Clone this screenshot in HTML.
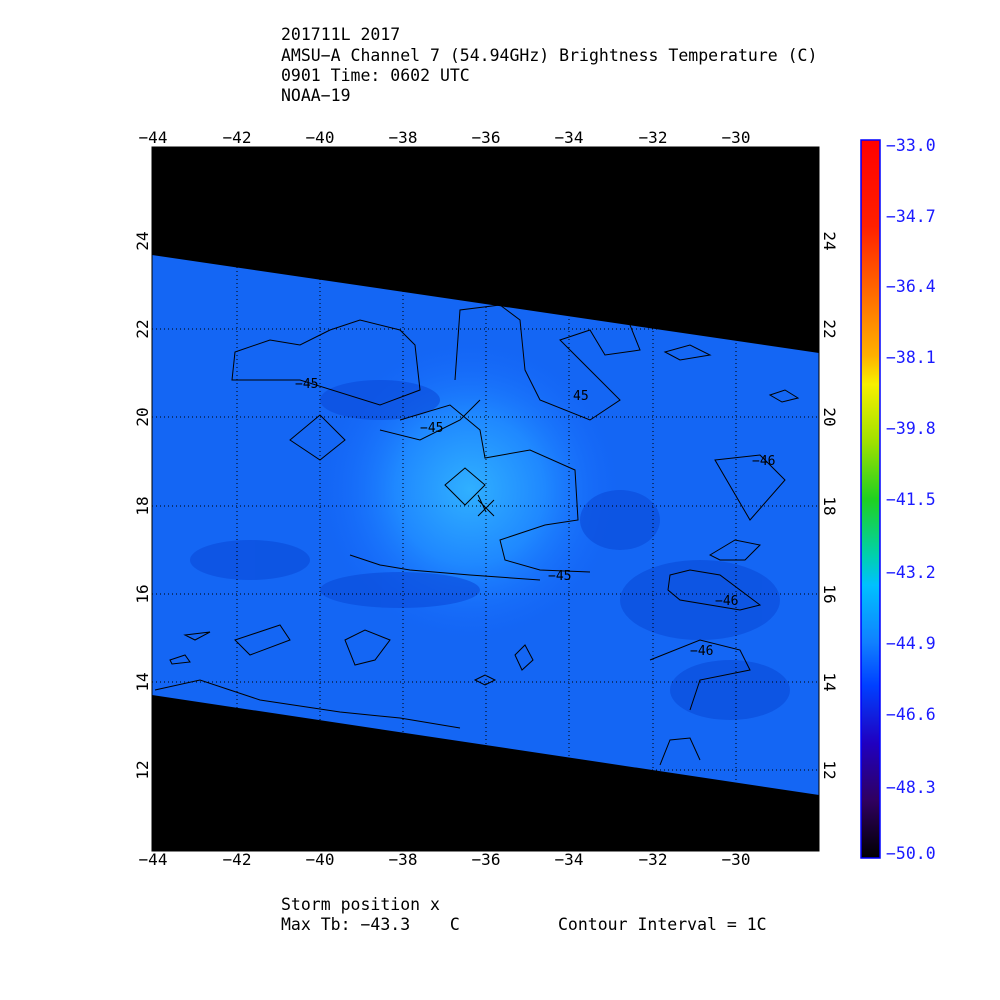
<!DOCTYPE html>
<html><head><style>
body{margin:0;background:#fff;width:1000px;height:1000px;overflow:hidden;font-family:"DejaVu Sans Mono","Liberation Mono",monospace;}
text{white-space:pre;}
</style></head><body>
<svg width="1000" height="1000" xmlns="http://www.w3.org/2000/svg" style="position:absolute;left:0;top:0">
<defs>
<radialGradient id="c1" cx="470" cy="490" r="150" gradientUnits="userSpaceOnUse">
<stop offset="0" stop-color="#30b0ff"/><stop offset="0.5" stop-color="#1f88ff"/><stop offset="1" stop-color="#1668ff" stop-opacity="0"/>
</radialGradient>
<linearGradient id="cb" x1="0" y1="0" x2="0" y2="1">
<stop offset="0" stop-color="#ff0000"/>
<stop offset="0.12" stop-color="#ff2000"/>
<stop offset="0.2" stop-color="#ff6000"/>
<stop offset="0.3" stop-color="#ffb000"/>
<stop offset="0.34" stop-color="#f8f000"/>
<stop offset="0.42" stop-color="#a0e000"/>
<stop offset="0.5" stop-color="#20d020"/>
<stop offset="0.58" stop-color="#00d0b0"/>
<stop offset="0.62" stop-color="#00c0ff"/>
<stop offset="0.7" stop-color="#1080ff"/>
<stop offset="0.76" stop-color="#0040ff"/>
<stop offset="0.84" stop-color="#2000c0"/>
<stop offset="0.92" stop-color="#300060"/>
<stop offset="1" stop-color="#000000"/>
</linearGradient>
</defs>
<g font-size="16.5" fill="#000">
<text x="281" y="40">201711L 2017</text>
<text x="281" y="61">AMSU−A Channel 7 (54.94GHz) Brightness Temperature (C)</text>
<text x="281" y="81">0901 Time: 0602 UTC</text>
<text x="281" y="101">NOAA−19</text>
<text x="281" y="910">Storm position x</text>
<text x="281" y="930">Max Tb: −43.3    C</text>
<text x="558" y="930">Contour Interval = 1C</text>
</g>
<rect x="152" y="147" width="667" height="704" fill="#000"/>
<polygon points="152,255 819,353 819,795 152,695" fill="#1466f4"/>
<polygon points="152,255 819,353 819,795 152,695" fill="url(#c1)"/>
<g fill="#0a4ad8" opacity="0.6">
<ellipse cx="700" cy="600" rx="80" ry="40"/><ellipse cx="620" cy="520" rx="40" ry="30"/>
<ellipse cx="250" cy="560" rx="60" ry="20"/><ellipse cx="400" cy="590" rx="80" ry="18"/>
<ellipse cx="730" cy="690" rx="60" ry="30"/><ellipse cx="380" cy="400" rx="60" ry="20"/>
</g>
<g stroke="#000" stroke-width="1" fill="none">
<path d="M232,380 L235,352 L270,340 L300,345 L330,330 L360,320 L400,330 L415,345 L420,390 L380,405 L300,380 L240,380Z"/>
<path d="M455,380 L460,310 L500,305 L520,320 L525,370 L540,400 L590,420 L620,400 L580,360 L560,340 L590,330 L605,355 L640,350 L630,325"/>
<path d="M400,420 L450,405 L480,430 L485,458 L530,450 L575,470 L578,520 L545,525 L500,540 L505,560 L540,570 L590,572"/>
<path d="M290,440 L320,415 L345,440 L320,460 Z"/>
<path d="M445,485 L465,468 L485,485 L465,505 Z"/>
<path d="M380,430 L420,440 L460,420 L480,400"/>
<path d="M350,555 L380,565 L410,570 L470,575 L540,580"/>
<path d="M665,352 L690,345 L710,355 L680,360 Z"/>
<path d="M710,555 L735,540 L760,545 L745,560 L720,560 Z"/>
<path d="M715,460 L760,455 L785,480 L750,520 Z"/>
<path d="M670,575 L690,570 L720,575 L760,605 L740,610 L680,600 L668,590Z"/>
<path d="M650,660 L700,640 L740,650 L750,670 L700,680 L690,710"/>
<path d="M770,395 L785,390 L798,398 L782,402 Z"/>
<path d="M185,635 L210,632 L195,640 Z M170,660 L185,655 L190,662 L172,664 Z"/>
<path d="M235,640 L280,625 L290,640 L250,655 Z"/>
<path d="M345,640 L365,630 L390,640 L375,660 L355,665 Z"/>
<path d="M515,655 L525,645 L533,660 L522,670 Z"/>
<path d="M475,680 L485,675 L495,680 L485,685 Z"/>
<path d="M155,690 L200,680 L260,700 L340,712 L400,718 L460,728"/>
<path d="M660,765 L670,740 L690,738 L700,760"/>
<path d="M478,495 L486,512 M478,500 L494,516 M494,500 L478,516"/>
</g>
<g font-size="13" fill="#000">
<text x="295" y="388">−45</text><text x="420" y="432">−45</text><text x="573" y="400">45</text>
<text x="548" y="580">−45</text><text x="715" y="605">−46</text><text x="752" y="465">−46</text><text x="690" y="655">−46</text>
</g>
<g stroke="#000" stroke-width="1" stroke-dasharray="1,3">
<path d="M237,147V851 M320,147V851 M403,147V851 M486,147V851 M569,147V851 M653,147V851 M736,147V851"/>
<path d="M152,241H819 M152,329H819 M152,417H819 M152,506H819 M152,594H819 M152,682H819 M152,770H819"/>
</g>
<rect x="152" y="147" width="667" height="704" fill="none" stroke="#000"/>
<g font-size="16" fill="#000" text-anchor="middle">
<text x="153" y="143">−44</text><text x="237" y="143">−42</text><text x="320" y="143">−40</text><text x="403" y="143">−38</text><text x="486" y="143">−36</text><text x="569" y="143">−34</text><text x="653" y="143">−32</text><text x="736" y="143">−30</text>
<text x="153" y="865">−44</text><text x="237" y="865">−42</text><text x="320" y="865">−40</text><text x="403" y="865">−38</text><text x="486" y="865">−36</text><text x="569" y="865">−34</text><text x="653" y="865">−32</text><text x="736" y="865">−30</text>
</g>
<g font-size="16" fill="#000" text-anchor="middle">
<text transform="translate(148,241) rotate(-90)">24</text><text transform="translate(148,329) rotate(-90)">22</text><text transform="translate(148,417) rotate(-90)">20</text><text transform="translate(148,506) rotate(-90)">18</text><text transform="translate(148,594) rotate(-90)">16</text><text transform="translate(148,682) rotate(-90)">14</text><text transform="translate(148,770) rotate(-90)">12</text>
<text transform="translate(824,241) rotate(90)">24</text><text transform="translate(824,329) rotate(90)">22</text><text transform="translate(824,417) rotate(90)">20</text><text transform="translate(824,506) rotate(90)">18</text><text transform="translate(824,594) rotate(90)">16</text><text transform="translate(824,682) rotate(90)">14</text><text transform="translate(824,770) rotate(90)">12</text>
</g>
<rect x="861" y="140" width="19" height="718" fill="url(#cb)" stroke="#0000ff" stroke-width="1.5"/>
<g font-size="16.5" fill="#1a1aff">
<text x="886" y="151">−33.0</text><text x="886" y="222">−34.7</text><text x="886" y="292">−36.4</text><text x="886" y="363">−38.1</text><text x="886" y="434">−39.8</text><text x="886" y="505">−41.5</text><text x="886" y="578">−43.2</text><text x="886" y="649">−44.9</text><text x="886" y="720">−46.6</text><text x="886" y="793">−48.3</text><text x="886" y="859">−50.0</text>
</g>
</svg>
</body></html>
